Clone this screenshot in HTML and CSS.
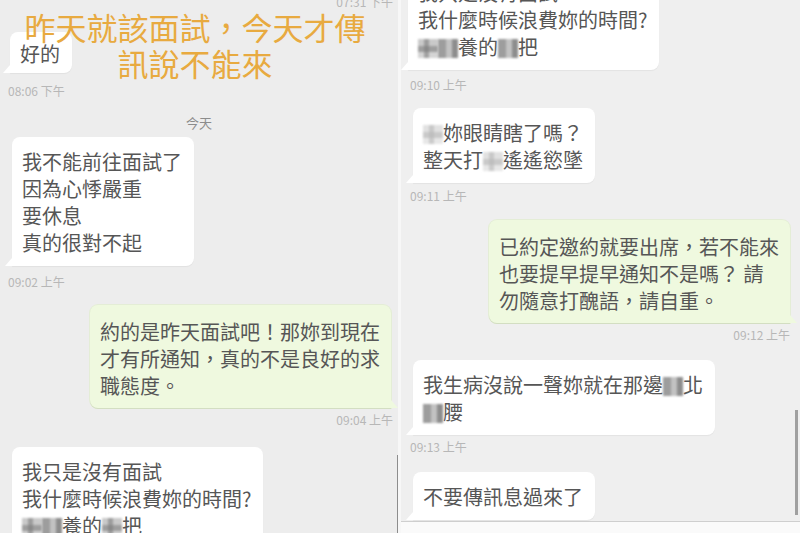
FILE: index.html
```html
<!DOCTYPE html>
<html lang="zh-Hant">
<head>
<meta charset="utf-8">
<title>對話截圖</title>
<link rel="stylesheet" href="styles.css">
</head>
<body>
<div class="screen">
  <section class="panel left">
    <div class="ts ts-r mt-n5">07:31 下午</div>
    <div class="bubble in short mt23">好的</div>
    <div class="ts mt11">08:06 下午</div>
    <div class="date mt16">今天</div>
    <div class="bubble in mt5">我不能前往面試了<br>因為心悸嚴重<br>要休息<br>真的很對不起</div>
    <div class="ts mt9">09:02 上午</div>
    <div class="bubble out mt16">約的是昨天面試吧！那妳到現在<br>才有所通知，真的不是良好的求<br>職態度。</div>
    <div class="ts ts-r mt5">09:04 上午</div>
    <div class="bubble in mt20">我只是沒有面試<br>我什麼時候浪費妳的時間?<br><span class="mz"></span><span class="mz dk"></span>養的<span class="mz"></span>把</div>

    <div class="caption">昨天就該面試，今天才傳<br>訊說不能來</div>
    <div class="vline"></div>
  </section>

  <section class="panel right">
    <div class="bubble in first mt-n32">我只是沒有面試<br>我什麼時候浪費妳的時間?<br><span class="mz"></span><span class="mz dk"></span>養的<span class="mz dk"></span>把</div>
    <div class="ts mt8">09:10 上午</div>
    <div class="bubble in mt16"><span class="mz lt"></span>妳眼睛瞎了嗎？<br>整天打<span class="mz lt"></span>遙遙慾墜</div>
    <div class="ts mt6">09:11 上午</div>
    <div class="bubble out mt17">已約定邀約就要出席，若不能來<br>也要提早提早通知不是嗎？ 請<br>勿隨意打醜語，請自重。</div>
    <div class="ts ts-r mt5">09:12 上午</div>
    <div class="bubble in mt18">我生病沒說一聲妳就在那邊<span class="mz dk"></span>北<br><span class="mz dk"></span>腰</div>
    <div class="ts mt5">09:13 上午</div>
    <div class="bubble in mt18">不要傳訊息過來了</div>
    <div class="footer"></div>
    <div class="scroll"></div>
  </section>
</div>
</body>
</html>
```

FILE: styles.css
```css
html, body {
  margin: 0;
  padding: 0;
}

body {
  width: 800px;
  height: 533px;
  overflow: hidden;
  background: #f7f7f7;
  font-family: "Noto Sans CJK TC", "Noto Sans", sans-serif;
}

.screen {
  display: flex;
  gap: 3px;
  height: 533px;
}

.panel {
  position: relative;
  display: flex;
  flex-direction: column;
  height: 533px;
  overflow: hidden;
  background: #ededed;
}

.left {
  width: 398px;
}

.right {
  flex: 1;
  background: #efefef;
}

.panel > * {
  flex-shrink: 0;
}

/* bubbles */
.bubble {
  position: relative;
  font-size: 20px;
  line-height: 27px;
  color: #565656;
  padding: 11px 12px 10px 10px;
  border-radius: 8px;
  white-space: nowrap;
}

.in {
  align-self: flex-start;
  background: #ffffff;
  border-bottom-left-radius: 0;
  box-shadow: 0 1px 1px rgba(0, 0, 0, 0.05);
}

.left .in {
  margin-left: 12px;
}

.right .in {
  margin-left: 12px;
}

.right .in.first {
  margin-left: 7px;
}

.in::before {
  content: "";
  position: absolute;
  left: -7px;
  bottom: 0;
  width: 0;
  height: 0;
  border-bottom: 8px solid #ffffff;
  border-left: 7px solid transparent;
}

.out {
  align-self: flex-end;
  background: #eff9df;
  padding: 13px 11px 9px 10px;
  border-bottom-right-radius: 0;
  box-shadow: 0 1px 0 #d3dec2, 0 0 0 1px #e4edd6;
}

.left .out {
  margin-right: 7px;
}

.right .out {
  margin-right: 10px;
}

.out::after {
  content: "";
  position: absolute;
  right: -7px;
  bottom: 0;
  width: 0;
  height: 0;
  border-bottom: 8px solid #eff9df;
  border-right: 7px solid transparent;
}

.short {
  padding-top: 8px;
  padding-bottom: 6px;
  margin-left: 10px !important;
}

/* mosaic blocks */
.mz {
  display: inline-block;
  width: 20px;
  height: 19px;
  vertical-align: -3px;
  background:
    linear-gradient(90deg, rgba(255,255,255,0) 0 30%, rgba(120,120,120,0.55) 30% 55%, rgba(255,255,255,0) 55% 100%),
    linear-gradient(180deg, #c9c9c9 0 35%, #9e9e9e 35% 70%, #d4d4d4 70% 100%);
  filter: blur(1px);
}

.mz.dk {
  background:
    linear-gradient(90deg, #8c8c8c 0 40%, #b8b8b8 40% 70%, #7a7a7a 70% 100%);
  opacity: 0.85;
}

.mz.lt {
  opacity: 0.55;
}

/* timestamps */
.ts {
  font-size: 12px;
  line-height: 14px;
  color: #b7b7b7;
  white-space: nowrap;
}

.left .ts {
  margin-left: 8px;
  align-self: flex-start;
}

.right .ts {
  margin-left: 9px;
  align-self: flex-start;
}

.left .ts.ts-r {
  align-self: flex-end;
  margin-right: 5px;
}

.right .ts.ts-r {
  align-self: flex-end;
  margin-right: 10px;
}

.date {
  font-size: 13px;
  line-height: 18px;
  color: #8c8c8c;
  text-align: center;
}

/* spacing */
.mt-n5 { margin-top: -5px; }
.mt-n32 { margin-top: -32px; }
.mt5 { margin-top: 5px; }
.mt6 { margin-top: 6px; }
.mt8 { margin-top: 8px; }
.mt9 { margin-top: 9px; }
.mt11 { margin-top: 11px; }
.mt16 { margin-top: 16px; }
.mt17 { margin-top: 17px; }
.mt18 { margin-top: 18px; }
.mt20 { margin-top: 20px; }
.mt23 { margin-top: 23px; }

/* overlay caption */
.caption {
  position: absolute;
  top: 9px;
  left: 0;
  width: 390px;
  text-align: center;
  font-size: 31px;
  line-height: 36px;
  color: #e8aa40;
  white-space: nowrap;
  z-index: 2;
}

.vline {
  position: absolute;
  right: -1px;
  top: 455px;
  width: 2px;
  height: 78px;
  background: #8d8d8d;
}

.footer {
  margin-top: auto;
  height: 11px;
  border-top: 1px solid #cfcfcf;
  background: #fafafa;
}

.scroll {
  position: absolute;
  right: 2px;
  top: 410px;
  width: 3px;
  height: 105px;
  background: #a0a0a0;
}
```
